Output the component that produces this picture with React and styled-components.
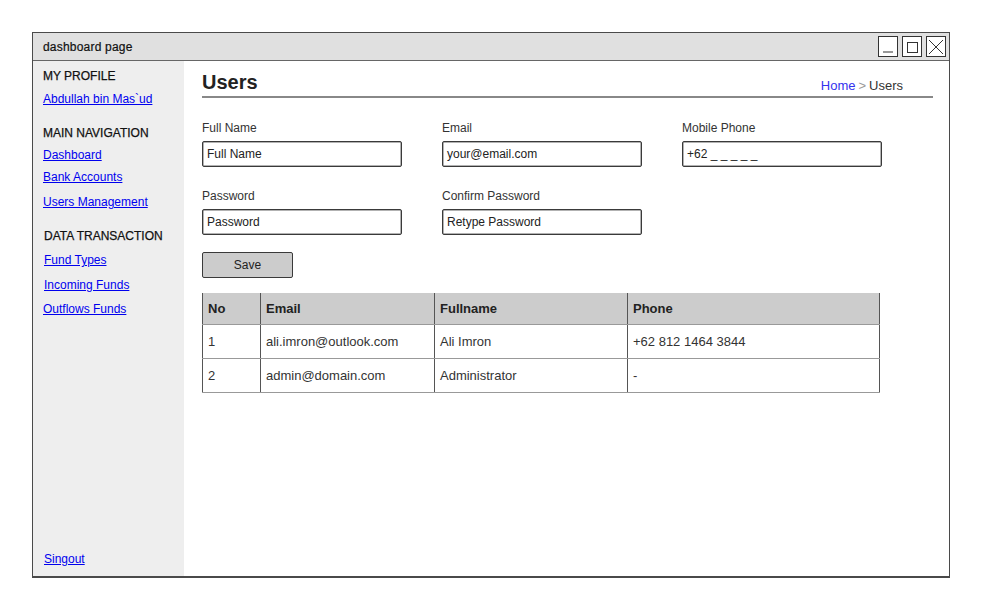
import React from "react";
import styled, { createGlobalStyle } from "styled-components";

const SKETCH = `"Liberation Sans", Arial, sans-serif`;

const GlobalStyle = createGlobalStyle`
  body {
    margin: 0;
    background: #ffffff;
    font-family: ${SKETCH};
  }
`;

const navGroups = [
  {
    title: "MY PROFILE",
    top: 0,
    links: [{ label: "Abdullah bin Mas`ud", gap: 7 }],
  },
  {
    title: "MAIN NAVIGATION",
    top: 18,
    links: [
      { label: "Dashboard", gap: 6 },
      { label: "Bank Accounts", gap: 6 },
      { label: "Users Management", gap: 9 },
    ],
  },
  {
    title: "DATA TRANSACTION",
    top: 18,
    indent: 1,
    links: [
      { label: "Fund Types", gap: 8, indent: 1 },
      { label: "Incoming Funds", gap: 9, indent: 1 },
      { label: "Outflows Funds", gap: 8 },
    ],
  },
];

const columns = [
  { key: "no", label: "No", width: 58 },
  { key: "email", label: "Email", width: 174 },
  { key: "name", label: "Fullname", width: 193 },
  { key: "phone", label: "Phone" },
];

const users = [
  { no: 1, email: "ali.imron@outlook.com", name: "Ali Imron", phone: "+62 812 1464 3844" },
  { no: 2, email: "admin@domain.com", name: "Administrator", phone: "-" },
];

const App = () => {
  return (
    <>
      <GlobalStyle />
      <Page>
        <Window>
          <TitleBar>
            <TitleText>dashboard page</TitleText>
            <Controls>
              <ControlBox>
                <svg width="12" height="12" viewBox="0 0 12 12">
                  <line x1="1" y1="11" x2="11" y2="11" stroke="#333" strokeWidth="1" />
                </svg>
              </ControlBox>
              <ControlBox>
                <svg width="12" height="12" viewBox="0 0 12 12">
                  <rect x="1.5" y="1.5" width="10" height="10" fill="none" stroke="#333" strokeWidth="1" />
                </svg>
              </ControlBox>
              <ControlBox>
                <svg width="16" height="16" viewBox="0 0 16 16">
                  <line x1="1" y1="1" x2="15" y2="15" stroke="#333" strokeWidth="1" />
                  <line x1="15" y1="1" x2="1" y2="15" stroke="#333" strokeWidth="1" />
                </svg>
              </ControlBox>
            </Controls>
          </TitleBar>

          <Body>
            <Sidebar>
              {navGroups.map((group) => (
                <NavGroup key={group.title} $top={group.top}>
                  <NavHeading $indent={group.indent || 0}>{group.title}</NavHeading>
                  {group.links.map((link) => (
                    <NavLink key={link.label} href="#" $gap={link.gap} $indent={link.indent || 0}>
                      {link.label}
                    </NavLink>
                  ))}
                </NavGroup>
              ))}
              <SignOut href="#">Singout</SignOut>
            </Sidebar>

            <Main>
              <Header>
                <PageTitle>Users</PageTitle>
                <Breadcrumb>
                  <Crumb href="#">Home</Crumb>
                  <Sep>&gt;</Sep>
                  <Current>Users</Current>
                </Breadcrumb>
              </Header>

              <FormGrid>
                <Field>
                  <Label>Full Name</Label>
                  <Input>Full Name</Input>
                </Field>
                <Field>
                  <Label>Email</Label>
                  <Input>your@email.com</Input>
                </Field>
                <Field>
                  <Label>Mobile Phone</Label>
                  <Input>+62 _ _ _ _ _</Input>
                </Field>
                <Field>
                  <Label>Password</Label>
                  <Input>Password</Input>
                </Field>
                <Field>
                  <Label>Confirm Password</Label>
                  <Input>Retype Password</Input>
                </Field>
              </FormGrid>

              <SaveButton>Save</SaveButton>

              <Table>
                <colgroup>
                  {columns.map((c) => (
                    <col key={c.key} style={c.width ? { width: c.width } : undefined} />
                  ))}
                </colgroup>
                <thead>
                  <tr>
                    {columns.map((c) => (
                      <Th key={c.key}>{c.label}</Th>
                    ))}
                  </tr>
                </thead>
                <tbody>
                  {users.map((u) => (
                    <tr key={u.no}>
                      {columns.map((c) => (
                        <Td key={c.key}>{u[c.key]}</Td>
                      ))}
                    </tr>
                  ))}
                </tbody>
              </Table>
            </Main>
          </Body>
        </Window>
      </Page>
    </>
  );
};

export default App;

const Page = styled.div`
  padding: 32px 0 0 32px;
`;

const Window = styled.div`
  width: 916px;
  height: 543px;
  border: 1px solid #4a4a4a;
  border-bottom-width: 2px;
  display: flex;
  flex-direction: column;
  background: #ffffff;
`;

const TitleBar = styled.div`
  height: 27px;
  background: #e0e0e0;
  border-bottom: 1px solid #666;
  display: flex;
  align-items: center;
  justify-content: space-between;
  padding: 0 3px 0 10px;
  flex-shrink: 0;
`;

const TitleText = styled.span`
  font-size: 12px;
  color: #111;
  letter-spacing: 0.2px;
  -webkit-text-stroke: 0.2px #111;
`;

const Controls = styled.div`
  display: flex;
  gap: 4px;
`;

const ControlBox = styled.div`
  width: 18px;
  height: 19px;
  border: 1px solid #333;
  background: #ffffff;
  display: flex;
  align-items: center;
  justify-content: center;
`;

const Body = styled.div`
  flex: 1;
  display: flex;
  min-height: 0;
`;

const Sidebar = styled.nav`
  width: 141px;
  background: #eeeeee;
  padding: 7px 0 9px 10px;
  display: flex;
  flex-direction: column;
`;

const NavGroup = styled.div`
  margin-top: ${(p) => p.$top}px;
  display: flex;
  flex-direction: column;
  align-items: flex-start;
`;

const NavHeading = styled.div`
  font-size: 12px;
  line-height: 16px;
  color: #111;
  -webkit-text-stroke: 0.25px #111;
  padding-left: ${(p) => p.$indent}px;
`;

const NavLink = styled.a`
  font-size: 12px;
  line-height: 16px;
  color: #0000ee;
  text-decoration: underline;
  margin-top: ${(p) => p.$gap}px;
  margin-left: ${(p) => p.$indent}px;
`;

const SignOut = styled(NavLink)`
  margin-top: auto;
  margin-left: 1px;
`;

const Main = styled.main`
  flex: 1;
  padding: 0 16px 0 18px;
  display: flex;
  flex-direction: column;
  align-items: flex-start;
`;

const Header = styled.div`
  align-self: stretch;
  display: flex;
  align-items: flex-end;
  justify-content: space-between;
  padding: 9px 30px 2px 0;
  border-bottom: 2px solid #888;
`;

const PageTitle = styled.h1`
  margin: 0;
  font-size: 20px;
  line-height: 24px;
  font-weight: bold;
  color: #222;
`;

const Breadcrumb = styled.div`
  font-size: 13px;
  line-height: 16px;
  margin-bottom: 0;
`;

const Crumb = styled.a`
  color: #3333ee;
  text-decoration: none;
`;

const Sep = styled.span`
  color: #999;
  margin: 0 3px;
`;

const Current = styled.span`
  color: #333;
`;

const FormGrid = styled.div`
  display: grid;
  grid-template-columns: repeat(3, 200px);
  column-gap: 40px;
  row-gap: 21px;
  margin-top: 22px;
`;

const Field = styled.div`
  display: flex;
  flex-direction: column;
  gap: 5px;
`;

const Label = styled.div`
  font-size: 12px;
  line-height: 16px;
  color: #333;
`;

const Input = styled.div`
  box-sizing: border-box;
  height: 26px;
  border: 1px solid #3a3a3a;
  border-radius: 2px;
  box-shadow: inset 0 0 0 0.5px #666;
  padding: 0 4px;
  font-size: 12px;
  line-height: 24px;
  color: #222;
  white-space: pre;
`;

const SaveButton = styled.button`
  margin-top: 17px;
  width: 91px;
  height: 26px;
  background: #cccccc;
  border: 1px solid #3a3a3a;
  border-radius: 2px;
  font-family: ${SKETCH};
  font-size: 12px;
  color: #222;
  padding: 0;
`;

const Table = styled.table`
  margin-top: 15px;
  width: 678px;
  table-layout: fixed;
  border-collapse: collapse;
  font-size: 13px;
  color: #333;
  border-left: 1px solid #555;
  border-right: 1px solid #555;
`;

const Th = styled.th`
  background: #cccccc;
  height: 31px;
  text-align: left;
  padding: 0 5px;
  font-weight: bold;
  color: #222;
  border-left: 1px solid #555;
  border-bottom: 1px solid #999;
`;

const Td = styled.td`
  height: 33px;
  padding: 0 5px;
  border-left: 1px solid #555;
  border-bottom: 1px solid #999;
  white-space: nowrap;
`;
